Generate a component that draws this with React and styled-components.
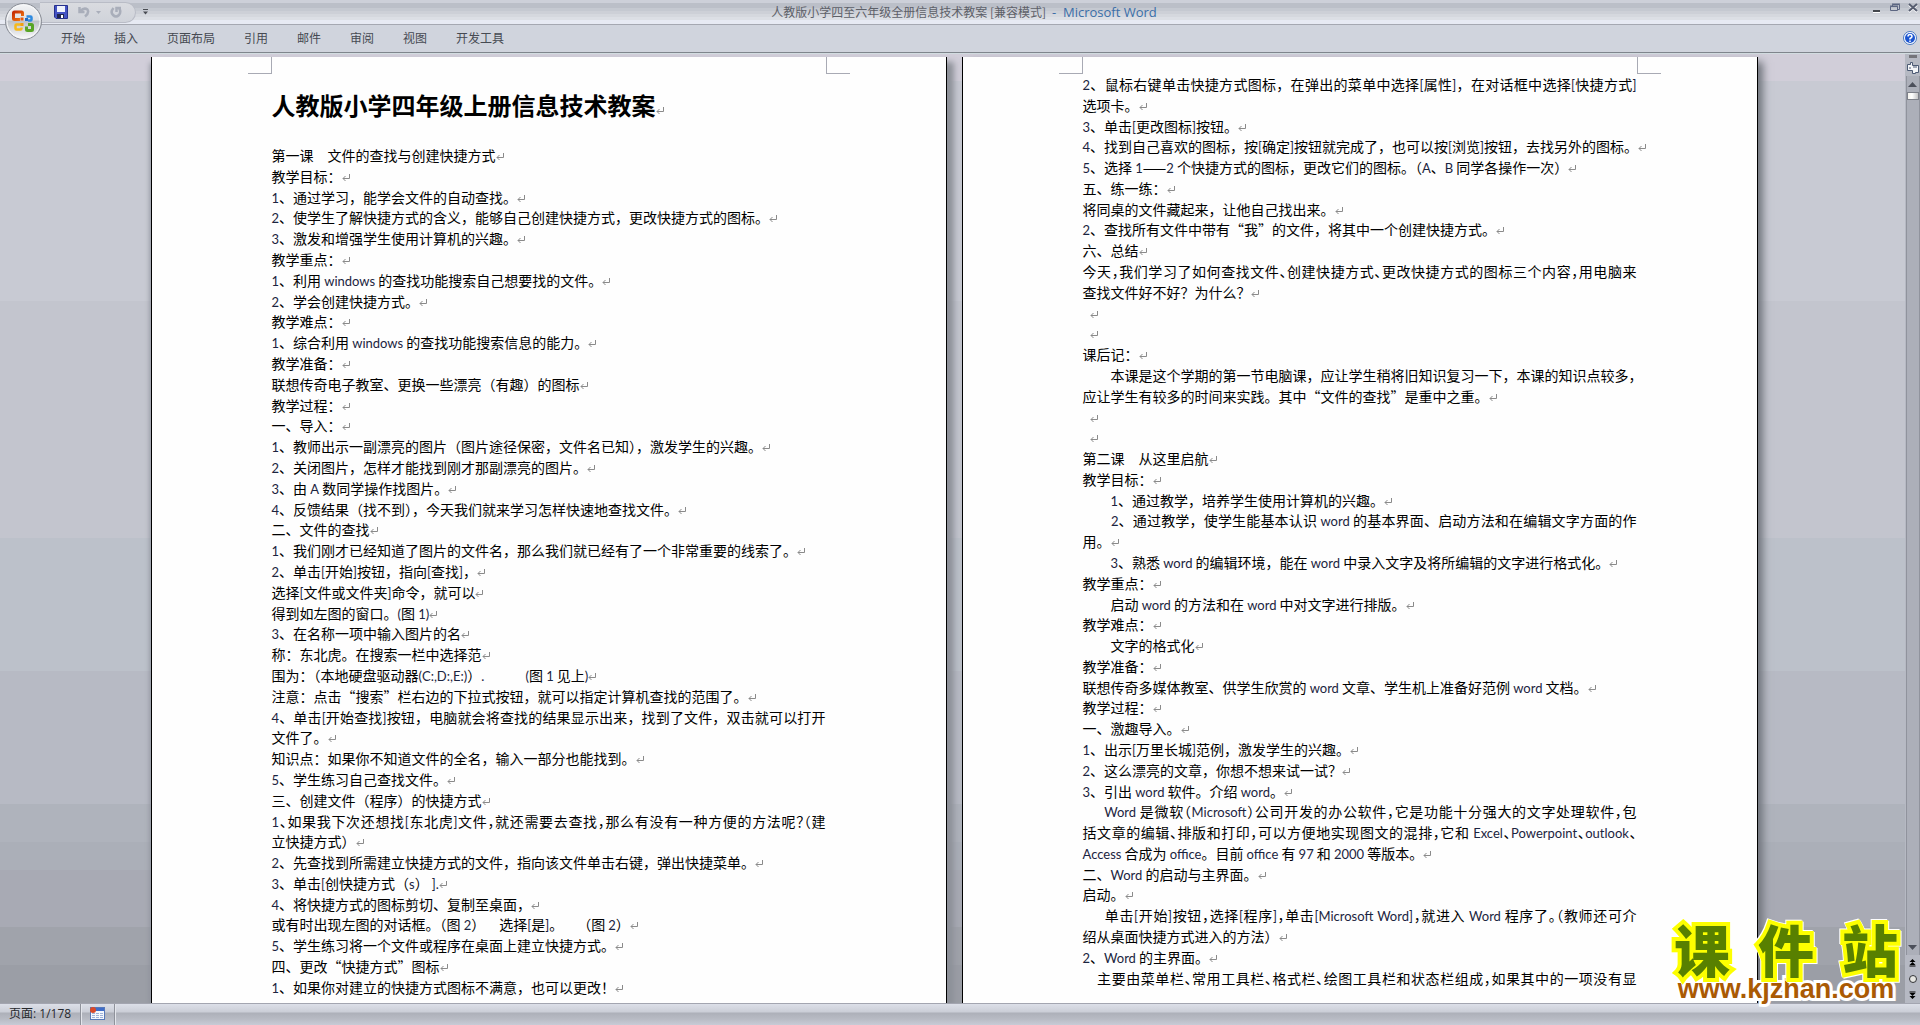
import React from 'react';
import styled, { createGlobalStyle, css } from 'styled-components';

const GlobalStyle = createGlobalStyle`
  * {
    box-sizing: border-box;
    margin: 0;
    padding: 0;
  }
  body {
    overflow: hidden;
    font-family: 'Noto Sans CJK SC', 'Open Sans', sans-serif;
    font-size: 12px;
  }
  button {
    border: 0;
    background: none;
    font: inherit;
    color: inherit;
  }
`;

const Window = styled.div`
  position: relative;
  display: flex;
  flex-direction: column;
  height: 100vh;
`;
const Header = styled.header`
  position: relative;
  flex: none;
`;
const TitleBar = styled.div`
  display: grid;
  grid-template-columns: 1fr auto 1fr;
  align-items: center;
  height: 25px;
  padding-left: 8px;
  border-bottom: 1px solid #a5a8b1;
  background: linear-gradient(
    #cdd0d9 0 3px,
    #bbbfc8 3px 8px,
    #c5c9d1 8px 11px,
    #cdd0d7 11px 14px,
    #d5d8de 14px 17px,
    #dcdfe5 17px 20px,
    #e7eaf3 20px
  );
`;
const QuickAccess = styled.div`
  display: flex;
  align-items: center;
  gap: 6px;
`;
const QuickPill = styled.div`
  display: flex;
  align-items: center;
  height: 21px;
  width: 96px;
  margin-left: 32px;
  padding-left: 14px;
  border: 1px solid #b9bcc6;
  border-left: 0;
  border-radius: 0 11px 11px 0;
  background: linear-gradient(#d9dbe0, #d0d3da);
`;
const QuickButton = styled.button`
  display: flex;
  align-items: center;
  justify-content: center;
  width: ${({ $width }) => $width || 14}px;
  height: 16px;
  margin-right: ${({ $gap }) => $gap || 0}px;
`;
const WindowTitle = styled.h1`
  display: flex;
  align-items: center;
  gap: 6px;
  font-size: 12px;
  line-height: 20px;
  font-weight: 400;
  color: #5d6068;
  white-space: nowrap;
`;
const AppName = styled.span`
  font-family: 'Open Sans', sans-serif;
  font-size: 13px;
  color: #3a6ea8;
`;
const WindowControls = styled.div`
  display: flex;
  justify-content: flex-end;
  align-self: start;
  gap: 8px;
  padding: 2px 2px 0 0;
`;
const ControlButton = styled.button`
  display: flex;
  width: 10px;
  height: 12px;
`;
const RibbonTabs = styled.nav`
  display: flex;
  align-items: center;
  gap: 29px;
  height: 28px;
  padding: 0 3px 1px 61px;
  border-bottom: 1px solid #7f858c;
  background: #d0d4dd;
`;
const RibbonTab = styled.button`
  font-size: 12px;
  line-height: 20px;
  color: #464a52;
  white-space: nowrap;
`;
const HelpButton = styled.button`
  display: flex;
  margin-left: auto;
`;
const OfficeButton = styled.button`
  position: absolute;
  top: 2px;
  left: 4px;
  display: flex;
`;

const Workspace = styled.main`
  display: flex;
  flex: 1;
  min-height: 0;
  border-top: 1px solid #d2dce0;
  background: linear-gradient(
    #d1ced9 0 27px,
    #c8cad3 27px 26%,
    #c3c5ce 26% 51%,
    #bcc1ca 51% 65%,
    #b7bac4 65% 79%,
    #afb3bc 79% 83%,
    #abafb8 83% 86%,
    #a8aab4 86% 92%,
    #a0a3ab 92% 96%,
    #9b9ea6 96%
  );
`;
const Pages = styled.div`
  display: flex;
  justify-content: center;
  flex: 1;
  gap: 15px;
  padding: 3px 0 0 3px;
`;
const Page = styled.article`
  display: flex;
  flex-direction: column;
  width: 796px;
  border: solid #000;
  border-width: 0 1px;
  background: #fefefe;
  box-shadow: ${({ $last }) =>
    $last ? '6px 4px 8px -1px #70747c' : '-3px 4px 5px -2px #8d919b, 8px 4px 6px -1px #8d9098'};
`;
const MarginMarks = styled.div`
  display: flex;
  flex: none;
  justify-content: space-between;
  padding: 0 96px;
`;
const MarginMark = styled.span`
  width: 24px;
  height: 17px;
  border-bottom: 1px solid #a8aab4;
  ${({ $right }) =>
    $right
      ? css`
          border-left: 1px solid #a8aab4;
        `
      : css`
          border-right: 1px solid #a8aab4;
        `}
`;
const DocTitle = styled.h2`
  flex: none;
  padding: 15px 120px 24px;
  font-size: 24px;
  line-height: 32px;
  font-weight: 700;
  color: #000;
  white-space: nowrap;
`;
const Lines = styled.div`
  display: flex;
  flex: 1;
  flex-direction: column;
  justify-content: space-between;
  min-height: 0;
  padding: ${({ $first }) => ($first ? '0 120px 6px' : '0 120px 15px')};
`;
const Line = styled.p`
  font-size: 14px;
  line-height: 20px;
  color: #000;
  white-space: nowrap;
  ${({ $justify }) =>
    $justify &&
    css`
      text-align: justify;
      text-align-last: justify;
    `}
  ${({ $tight }) =>
    $tight &&
    css`
      font-feature-settings: 'halt';
    `}
`;
const Latin = styled.span`
  font-family: Lato, sans-serif;
  font-size: 13px;
  line-height: 1;
  color: #1b2440;
`;
const ReturnSign = styled.svg`
  width: 8px;
  height: 8px;
  fill: none;
  stroke: #8a8a8a;
`;

const ScrollColumn = styled.aside`
  display: flex;
  flex-direction: column;
  align-items: center;
  flex: none;
  width: 15px;
  background: #b6b9c3;
`;
const SplitHandle = styled.span`
  flex: none;
  width: 8px;
  height: 3px;
  margin: 1px 0 2px;
  background: #74747a;
`;
const ScrollButton = styled.button`
  display: flex;
  align-items: center;
  justify-content: center;
  flex: none;
  width: 15px;
  height: 16px;
`;
const ScrollTrack = styled.div`
  display: flex;
  flex: 1;
  flex-direction: column;
  align-items: center;
  width: 14px;
  border: solid #90939d;
  border-width: 0 1px;
  background: #acafb9;
`;
const ScrollThumb = styled.span`
  width: 12px;
  height: 8px;
  border: 1px solid #7d8089;
  background: linear-gradient(90deg, #f6f4ee, #fff 40%, #c4c4c6);
`;
const ScrollSpacer = styled.span`
  flex: 1;
`;

const StatusBar = styled.footer`
  display: flex;
  flex: none;
  height: 22px;
  border-top: 1px solid #a3a5b0;
  background: linear-gradient(#dcdfe8 0, #cbced7 8px, #adb0b9 9px, #b8bbc4 15px, #cbced9 22px);
`;
const StatusItem = styled.button`
  display: flex;
  align-items: center;
  padding: 0 9px 2px;
  border-right: 1px solid #8f929b;
  box-shadow: 1px 0 #e4e6ec;
  font-family: 'Open Sans', 'Noto Sans CJK SC', sans-serif;
  font-size: 12px;
  line-height: 20px;
  color: #26282d;
`;

const Watermark = styled.div`
  position: absolute;
  right: 22px;
  bottom: 22px;
  width: 224px;
`;
const WatermarkName = styled.div`
  display: flex;
  justify-content: space-between;
  font-size: 56px;
  line-height: 54px;
  font-weight: 900;
  color: #588000;
  -webkit-text-stroke: 8px #fdff00;
  paint-order: stroke fill;
  filter: drop-shadow(1px 1px 0 #fff) drop-shadow(-1px -1px 0 #fff);
`;
const WatermarkUrl = styled.div`
  font-family: 'Liberation Sans', sans-serif;
  font-size: 27px;
  line-height: 28px;
  font-weight: 700;
  text-align: center;
  white-space: nowrap;
  color: #aa5a04;
  -webkit-text-stroke: 6px #fff;
  paint-order: stroke fill;
`;

// One entry per paragraph; an array holds the lines of a wrapped paragraph.
// A { tight } line is set with half-width punctuation.
const firstPage = [
  '第一课　文件的查找与创建快捷方式',
  '教学目标：',
  '1、通过学习，能学会文件的自动查找。',
  '2、使学生了解快捷方式的含义，能够自己创建快捷方式，更改快捷方式的图标。',
  '3、激发和增强学生使用计算机的兴趣。',
  '教学重点：',
  '1、利用 windows 的查找功能搜索自己想要找的文件。',
  '2、学会创建快捷方式。',
  '教学难点：',
  '1、综合利用 windows 的查找功能搜索信息的能力。',
  '教学准备：',
  '联想传奇电子教室、更换一些漂亮（有趣）的图标',
  '教学过程：',
  '一、导入：',
  '1、教师出示一副漂亮的图片（图片途径保密，文件名已知），激发学生的兴趣。',
  '2、关闭图片，怎样才能找到刚才那副漂亮的图片。',
  '3、由 A 数同学操作找图片。',
  '4、反馈结果（找不到），今天我们就来学习怎样快速地查找文件。',
  '二、文件的查找',
  '1、我们刚才已经知道了图片的文件名，那么我们就已经有了一个非常重要的线索了。',
  '2、单击[开始]按钮，指向[查找]，',
  '选择[文件或文件夹]命令，就可以',
  '得到如左图的窗口。(图 1)',
  '3、在名称一项中输入图片的名',
  '称：东北虎。在搜索一栏中选择范',
  '围为：（本地硬盘驱动器(C:,D:,E:)）.　　\u2002\u00a0 (图 1 见上)',
  '注意：点击“搜索”栏右边的下拉式按钮，就可以指定计算机查找的范围了。',
  ['4、单击[开始查找]按钮，电脑就会将查找的结果显示出来，找到了文件，双击就可以打开', '文件了。'],
  '知识点：如果你不知道文件的全名，输入一部分也能找到。',
  '5、学生练习自己查找文件。',
  '三、创建文件（程序）的快捷方式',
  [{ tight: '1、如果我下次还想找[东北虎]文件，就还需要去查找，那么有没有一种方便的方法呢？（建' }, '立快捷方式）'],
  '2、先查找到所需建立快捷方式的文件，指向该文件单击右键，弹出快捷菜单。',
  '3、单击[创快捷方式（s）\u00a0].',
  '4、将快捷方式的图标剪切、复制至桌面，',
  '或有时出现左图的对话框。（图 2）\u2002\u2002选择[是]。\u2002\u2002（图 2）',
  '5、学生练习将一个文件或程序在桌面上建立快捷方式。',
  '四、更改“快捷方式”图标',
  '1、如果你对建立的快捷方式图标不满意，也可以更改！',
];

const secondPage = [
  ['2、鼠标右键单击快捷方式图标，在弹出的菜单中选择[属性]，在对话框中选择[快捷方式]', '选项卡。'],
  '3、单击[更改图标]按钮。',
  '4、找到自己喜欢的图标，按[确定]按钮就完成了，也可以按[浏览]按钮，去找另外的图标。',
  '5、选择 1——2 个快捷方式的图标，更改它们的图标。（A、B 同学各操作一次）',
  '五、练一练：',
  '将同桌的文件藏起来，让他自己找出来。',
  '2、查找所有文件中带有“我”的文件，将其中一个创建快捷方式。',
  '六、总结',
  [{ tight: '今天，我们学习了如何查找文件、创建快捷方式、更改快捷方式的图标三个内容，用电脑来' }, '查找文件好不好？为什么？'],
  '\u2002',
  '\u2002',
  '课后记：',
  ['　　本课是这个学期的第一节电脑课，应让学生稍将旧知识复习一下，本课的知识点较多，', '应让学生有较多的时间来实践。其中“文件的查找”是重中之重。'],
  '\u2002',
  '\u2002',
  '第二课　从这里启航',
  '教学目标：',
  '　　1、通过教学，培养学生使用计算机的兴趣。',
  ['　　2、通过教学，使学生能基本认识 word 的基本界面、启动方法和在编辑文字方面的作', '用。'],
  '　　3、熟悉 word 的编辑环境，能在 word 中录入文字及将所编辑的文字进行格式化。',
  '教学重点：',
  '　　启动 word 的方法和在 word 中对文字进行排版。',
  '教学难点：',
  '　　文字的格式化',
  '教学准备：',
  '联想传奇多媒体教室、供学生欣赏的 word 文章、学生机上准备好范例 word 文档。',
  '教学过程：',
  '一、激趣导入。',
  '1、出示[万里长城]范例，激发学生的兴趣。',
  '2、这么漂亮的文章，你想不想来试一试？',
  '3、引出 word 软件。介绍 word。',
  [
    { tight: '　\u2002Word 是微软（Microsoft）公司开发的办公软件，它是功能十分强大的文字处理软件，包' },
    { tight: '括文章的编辑、排版和打印，可以方便地实现图文的混排，它和 Excel、Powerpoint、outlook、' },
    'Access 合成为 office。目前 office 有 97 和 2000 等版本。',
  ],
  '二、Word 的启动与主界面。',
  '启动。',
  [
    { tight: '　\u2002单击[开始]按钮，选择[程序]，单击[Microsoft Word]，就进入 Word 程序了。（教师还可介' },
    '绍从桌面快捷方式进入的方法）',
  ],
  '2、Word 的主界面。',
  // runs on to the next page
  [{ tight: '　主要由菜单栏、常用工具栏、格式栏、绘图工具栏和状态栏组成，如果其中的一项没有显' }, null],
];

const tabs = ['开始', '插入', '页面布局', '引用', '邮件', '审阅', '视图', '开发工具'];

function renderText(text) {
  return text
    .split(/([!-~]+(?: [!-~]+)*)/)
    .map((part, i) => (i % 2 ? <Latin key={i}>{part}</Latin> : part));
}

function DocLines({ paragraphs, first }) {
  return (
    <Lines $first={first}>
      {paragraphs.map((paragraph, i) => {
        const lines = [].concat(paragraph);
        return lines.map((line, j) => {
          if (line === null) return null;
          const last = j === lines.length - 1;
          return (
            <Line key={`${i}-${j}`} $justify={!last} $tight={Boolean(line.tight)}>
              {renderText(line.tight || line)}
              {last && (
                <ReturnSign viewBox="0 0 8 8" aria-hidden="true">
                  <path d="M7.5 0v4.5H1M3.5 2L1 4.5L3.5 7" />
                </ReturnSign>
              )}
            </Line>
          );
        });
      })}
    </Lines>
  );
}

function OfficeLogo() {
  return (
    <svg width="39" height="39" viewBox="0 0 39 39">
      <defs>
        <linearGradient id="orb" x1="0" y1="0" x2="0" y2="1">
          <stop offset="0" stopColor="#f4f5f7" />
          <stop offset="0.45" stopColor="#dfe1e5" />
          <stop offset="0.5" stopColor="#bfc3ca" />
          <stop offset="1" stopColor="#fbfbfc" />
        </linearGradient>
        <linearGradient id="red" x1="0" y1="0" x2="1" y2="1">
          <stop offset="0" stopColor="#c52c06" />
          <stop offset="1" stopColor="#f47a10" />
        </linearGradient>
      </defs>
      <circle cx="19.5" cy="19.5" r="18" fill="url(#orb)" stroke="#888c95" />
      <circle cx="19.5" cy="19.5" r="16.5" fill="none" stroke="#f7f8fa" />
      <path d="M16 17.5h-5.5q-1 0-1-1v-5.5q0-1 1-1h7q1 0 1 1v3" fill="none" stroke="url(#red)" strokeWidth="3" />
      <rect x="16.5" y="15.5" width="3" height="3" fill="#e8590c" />
      <path d="M22.5 14.5h4q1 0 1 1v2q0 1-1 1h-2.5" fill="none" stroke="#2e8ae0" strokeWidth="2.5" />
      <rect x="21" y="16" width="3" height="3" fill="#1f6cc8" />
      <path d="M17 22.5h-4.5q-1 0-1 1v3q0 1 1 1h4q1 0 1-1v-1" fill="none" stroke="#f6b91c" strokeWidth="2.5" />
      <rect x="16.5" y="21" width="3" height="3" fill="#f0a010" />
      <path d="M24 22.5h3.5q1 0 1 1v4q0 1-1 1h-4q-1 0-1-1v-3" fill="none" stroke="#58a526" strokeWidth="3" />
    </svg>
  );
}

function SaveIcon() {
  return (
    <svg width="14" height="14" viewBox="0 0 14 14">
      <path d="M0.5 0.5h13v13h-11.5l-1.5-1.5z" fill="#4453c4" stroke="#26308c" />
      <rect x="3" y="1" width="8" height="6" fill="#eef2fc" />
      <rect x="3" y="9" width="7" height="4" fill="#20264e" />
      <rect x="7" y="10" width="2" height="3" fill="#fff" />
    </svg>
  );
}

export default function App() {
  return (
    <Window>
      <GlobalStyle />
      <Header>
        <TitleBar>
          <QuickAccess>
            <QuickPill>
              <QuickButton aria-label="保存" $gap={9}>
                <SaveIcon />
              </QuickButton>
              <QuickButton aria-label="撤消" $gap={4}>
                <svg width="12" height="12" viewBox="0 0 12 12" fill="none" stroke="#a9aeba" strokeWidth="2.5">
                  <path d="M1.5 1v5h5M2 5.5Q6 1 9.5 3.5Q11.5 7 7 10.5" />
                </svg>
              </QuickButton>
              <QuickButton aria-label="撤消列表" $width={6} $gap={8}>
                <svg width="5" height="3" viewBox="0 0 5 3">
                  <path d="M0 0h5L2.5 3z" fill="#a9aeba" />
                </svg>
              </QuickButton>
              <QuickButton aria-label="重复">
                <svg width="12" height="12" viewBox="0 0 12 12" fill="none" stroke="#a9aeba" strokeWidth="2.5">
                  <path d="M3.5 2Q0 6 3 9Q6 12 9 9Q11.5 6 9 2M6.5 6V2H11" />
                </svg>
              </QuickButton>
            </QuickPill>
            <QuickButton aria-label="自定义快速访问工具栏" $width={6}>
              <svg width="5" height="6" viewBox="0 0 5 6" fill="#4a4d54">
                <path d="M0 0h5v1H0zM0 2.5h5L2.5 5.5z" />
              </svg>
            </QuickButton>
          </QuickAccess>
          <WindowTitle>
            人教版小学四至六年级全册信息技术教案 [兼容模式]
            <AppName>-&nbsp; Microsoft Word</AppName>
          </WindowTitle>
          <WindowControls>
            <ControlButton aria-label="最小化">
              <svg width="10" height="12" viewBox="0 0 10 12">
                <path d="M1 8h7v2H1z" fill="#44474d" />
                <path d="M1 10h7v1H1z" fill="#fff" />
              </svg>
            </ControlButton>
            <ControlButton aria-label="向下还原">
              <svg width="10" height="12" viewBox="0 0 10 12" fill="none" stroke="#5c6682">
                <path d="M2.5 4V2.5h7v5H8M2 2h8" />
                <path d="M0.5 4.5h7v4h-7zM0 4h8" />
              </svg>
            </ControlButton>
            <ControlButton aria-label="关闭">
              <svg width="10" height="12" viewBox="0 0 10 12">
                <path d="M1 3l8 7M9 3l-8 7" stroke="#fff" strokeWidth="2" />
                <path d="M1 2l8 7M9 2L1 9" stroke="#565d70" strokeWidth="2" />
              </svg>
            </ControlButton>
          </WindowControls>
        </TitleBar>
        <RibbonTabs>
          {tabs.map((tab) => (
            <RibbonTab key={tab}>{tab}</RibbonTab>
          ))}
          <HelpButton aria-label="帮助">
            <svg width="14" height="14" viewBox="0 0 14 14">
              <circle cx="7" cy="7" r="6.5" fill="#fff" stroke="#4a78c0" />
              <circle cx="7" cy="7" r="5" fill="#1c55d0" />
              <path
                d="M5 5.5Q5 3.5 7 3.5T9 5.5Q9 6.5 7 7.5V8.5M7 9.5v1.5"
                fill="none"
                stroke="#fff"
                strokeWidth="1.5"
              />
            </svg>
          </HelpButton>
        </RibbonTabs>
        <OfficeButton aria-label="Office 按钮">
          <OfficeLogo />
        </OfficeButton>
      </Header>

      <Workspace>
        <Pages>
          <Page>
            <MarginMarks>
              <MarginMark />
              <MarginMark $right />
            </MarginMarks>
            <DocTitle>
              人教版小学四年级上册信息技术教案
              <ReturnSign viewBox="0 0 8 8" aria-hidden="true">
                <path d="M7.5 0v4.5H1M3.5 2L1 4.5L3.5 7" />
              </ReturnSign>
            </DocTitle>
            <DocLines paragraphs={firstPage} first />
          </Page>
          <Page $last>
            <MarginMarks>
              <MarginMark />
              <MarginMark $right />
            </MarginMarks>
            <DocLines paragraphs={secondPage} />
          </Page>
        </Pages>
        <ScrollColumn>
          <SplitHandle />
          <ScrollButton aria-label="标尺">
            <svg width="12" height="12" viewBox="0 0 12 12" fill="#f4f5f8" stroke="#4c5a74">
              <path d="M0.5 2.5h3v-2h2v3h6v7h-3v1h-3v-3h-5z" />
              <path d="M7 4v2M9 4v2M3 5v2" />
            </svg>
          </ScrollButton>
          <ScrollTrack>
            <ScrollButton aria-label="向上滚动">
              <svg width="9" height="5" viewBox="0 0 9 5">
                <path d="M0 5h9L4.5 0z" fill="#4b4f5a" />
              </svg>
            </ScrollButton>
            <ScrollThumb />
            <ScrollSpacer />
            <ScrollButton aria-label="向下滚动">
              <svg width="9" height="5" viewBox="0 0 9 5">
                <path d="M0 0h9L4.5 5z" fill="#4b4f5a" />
              </svg>
            </ScrollButton>
          </ScrollTrack>
          <ScrollButton aria-label="前一页">
            <svg width="7" height="8" viewBox="0 0 7 8" fill="#000">
              <path d="M0.5 3L3.5 0L6.5 3zM0.5 6L3.5 3L6.5 6zM0.5 6.5h6v1h-6z" />
            </svg>
          </ScrollButton>
          <ScrollButton aria-label="选择浏览对象">
            <svg width="8" height="8" viewBox="0 0 8 8">
              <circle cx="4" cy="4" r="3.5" fill="#e6e6e2" stroke="#303236" />
            </svg>
          </ScrollButton>
          <ScrollButton aria-label="下一页">
            <svg width="7" height="8" viewBox="0 0 7 8" fill="#000">
              <path d="M0.5 0.5h6v1h-6zM0.5 2L3.5 5L6.5 2zM0.5 5L3.5 8L6.5 5z" />
            </svg>
          </ScrollButton>
        </ScrollColumn>
      </Workspace>

      <StatusBar>
        <StatusItem>页面: 1/178</StatusItem>
        <StatusItem aria-label="宏">
          <svg width="15" height="13" viewBox="0 0 15 13">
            <rect x="0.5" y="0.5" width="14" height="12" fill="#f4f7fd" stroke="#5678b8" />
            <rect x="1" y="1" width="13" height="3" fill="#3f6cc8" />
            <path d="M2 6.5h11M2 8.5h11M2 10.5h11" stroke="#9fb2d8" strokeDasharray="3 1" />
            <circle cx="3" cy="3" r="3" fill="#d9492a" />
          </svg>
        </StatusItem>
      </StatusBar>

      <Watermark>
        <WatermarkName>
          <span>课</span>
          <span>件</span>
          <span>站</span>
        </WatermarkName>
        <WatermarkUrl>www.kjzhan.com</WatermarkUrl>
      </Watermark>
    </Window>
  );
}
